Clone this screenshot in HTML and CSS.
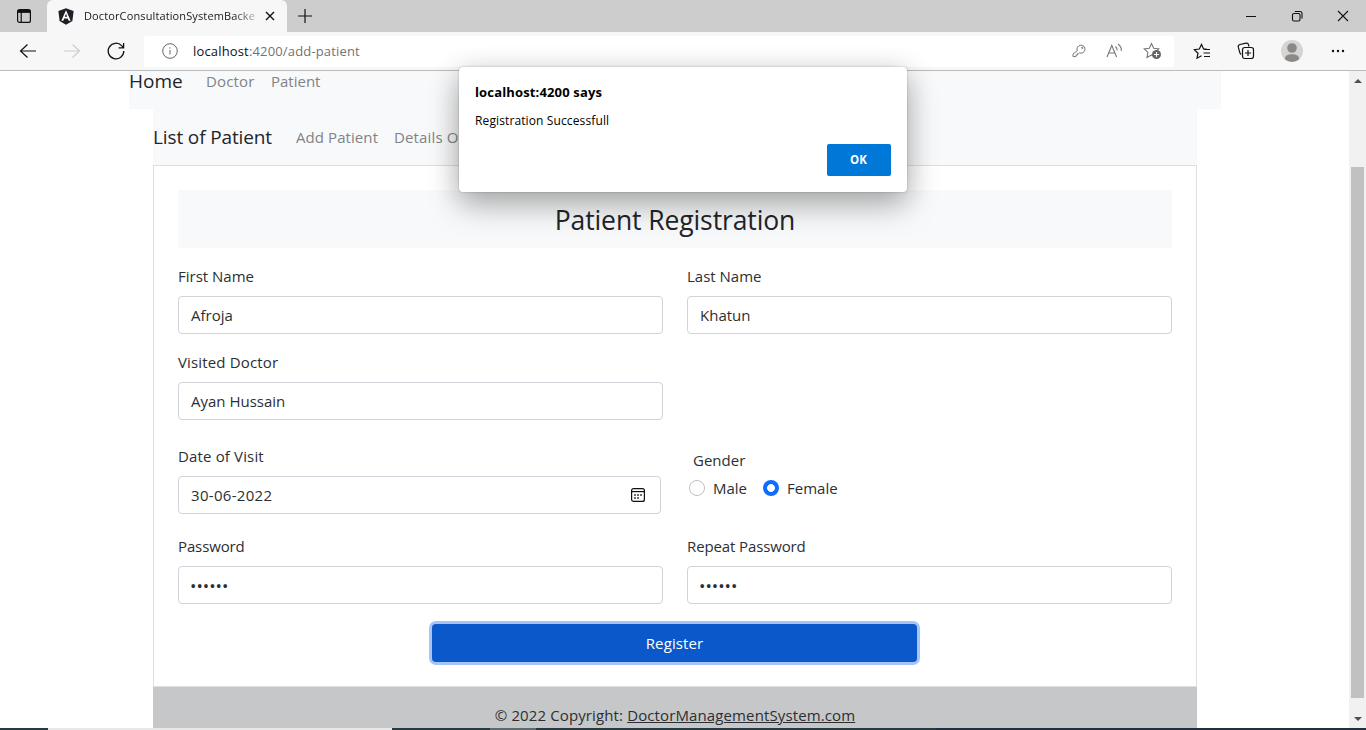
FILE: index.html
```html
<!DOCTYPE html>
<html lang="en">
<head>
<meta charset="utf-8">
<title>DoctorConsultationSystemBackend</title>
<link rel="stylesheet" href="styles.css">
</head>
<body>
<div class="window">
  <header class="tabstrip">
    <svg class="tab-actions" width="16" height="16" viewBox="0 0 16 16" fill="none" stroke="#111" stroke-width="1.2"><rect x="1.6" y="1.6" width="12.8" height="12.8" rx="2"/><path d="M1.6 3.4h12.8" stroke-width="3"/><path d="M5.2 4v10.4"/></svg>
    <div class="tab">
      <svg width="16" height="17" viewBox="0 0 16 17"><path d="M8 .3l7.6 2.7-1.2 10L8 16.7 1.600 13 .4 3z" fill="#1d2025"/><path d="M8 2.200L3.300 12.800h2l.9-2.400h3.600l.9 2.400h2zM8 5.700l1.200 3H6.800z" fill="#fff" fill-rule="evenodd"/></svg>
      <span class="tab-title">DoctorConsultationSystemBacke</span>
      <svg class="tab-close" width="10" height="10" viewBox="0 0 10 10" stroke="#111" stroke-width="1.4"><path d="M1 1l8 8M9 1L1 9"/></svg>
    </div>
    <svg class="new-tab" width="16" height="16" viewBox="0 0 16 16" stroke="#111" stroke-width="1.200"><path d="M8 1v14M1 8h14"/></svg>
    <div class="window-buttons">
      <svg width="12" height="12" viewBox="0 0 12 12" stroke="#111"><path d="M1 6.500h10"/></svg>
      <svg width="12" height="12" viewBox="0 0 12 12" fill="none" stroke="#111" stroke-width="1.100"><rect x="1.500" y="3.500" width="7.500" height="7.500" rx="1.500"/><path d="M3.800 1.500h5.200a2 2 0 0 1 2 2v5"/></svg>
      <svg width="12" height="12" viewBox="0 0 12 12" stroke="#111" stroke-width="1.100"><path d="M1 1l10 10M11 1L1 11"/></svg>
    </div>
  </header>
  <div class="toolbar">
    <svg class="nav-back" width="18" height="16" viewBox="0 0 18 16" fill="none" stroke="#111" stroke-width="1.200"><path d="M17 8H1.500M8.500 1.500L1.500 8l7 6.500"/></svg>
    <svg class="nav-forward" width="18" height="16" viewBox="0 0 18 16" fill="none" stroke="#ccc" stroke-width="1.200"><path d="M1 8h15.500M9.500 1.500l7 6.500-7 6.500"/></svg>
    <svg class="nav-reload" width="18" height="18" viewBox="0 0 18 18" fill="none" stroke="#111" stroke-width="1.300"><path d="M16.800 9A7.800 7.800 0 1 1 14.600 3.600L16.500 5.600M16.600 1v4.800h-5"/></svg>
    <div class="address">
      <svg class="info" width="16" height="16" viewBox="0 0 16 16" fill="none" stroke="#666"><circle cx="8" cy="8" r="7.300"/><path d="M8 7v4.500M8 4.300v1.300"/></svg>
      <span class="url"><b>localhost</b>:4200/add-patient</span>
      <div class="address-icons">
        <svg width="14" height="14" viewBox="0 0 14 14" fill="none" stroke="#777"><path d="M5.300 6.700A4 4 0 1 1 7.500 8.900L6.600 9.700H5.400v1.400H4v1.500H1v-2.600z"/><circle cx="10.300" cy="3.800" r=".7"/></svg>
        <svg width="17" height="16" viewBox="0 0 17 16" fill="none" stroke="#777" stroke-width="1.100"><path d="M1 14L5.800 2.500 10.600 14M2.700 10h6.200M9.500 3.500q2 1.800 1.600 4M12 1q4 3 3.300 7"/></svg>
        <svg width="19" height="18" viewBox="0 0 19 18"><path d="M8.500 1.500l2.200 4.700 5.100.7-3.700 3.500.9 5-4.500-2.500L4 15.500l.9-5.100L1.200 6.900l5.100-.7z" fill="none" stroke="#777" stroke-width="1.100"/><circle cx="13.500" cy="12.500" r="4.500" fill="#666"/><path d="M13.500 10v5M11 12.500h5" stroke="#fff"/></svg>
      </div>
    </div>
    <div class="toolbar-icons">
      <svg width="18" height="17" viewBox="0 0 18 17" fill="none" stroke="#111" stroke-width="1.200"><path d="M14 6.300l-3.400-.4L8.500 1.500 6.300 6l-5 .7L5 10.200l-1 5 4.500-2.500M11 6.500h6M10.500 10H17M11 13.500h6"/></svg>
      <svg width="18" height="18" viewBox="0 0 18 18" fill="none" stroke="#111" stroke-width="1.200"><path d="M4.200 12.500A3 3 0 0 1 2.800 10.700L1.300 5.200A2.300 2.300 0 0 1 3 2.500L9 1.200A2.300 2.300 0 0 1 11.600 3l.4 1.500"/><rect x="5.500" y="5.500" width="11" height="11" rx="2.200"/><path d="M11 8v6M8 11h6"/></svg>
      <svg width="22" height="22" viewBox="0 0 22 22"><circle cx="11" cy="11" r="11" fill="#d6d4d2"/><circle cx="11" cy="8" r="4.800" fill="#8b8987"/><path d="M3.800 19.200q0-5 7.200-5t7.200 5A11 11 0 0 1 3.800 19.200z" fill="#8b8987"/></svg>
      <svg class="more" width="14" height="4" viewBox="0 0 14 4" fill="#111"><circle cx="2" cy="2" r="1.200"/><circle cx="7" cy="2" r="1.200"/><circle cx="12" cy="2" r="1.200"/></svg>
    </div>
  </div>

  <div class="viewport">
    <main class="page">
      <nav class="site-nav"><span class="brand home">Home</span><span class="link doctor">Doctor</span><span class="link patient">Patient</span></nav>
      <nav class="sub-nav"><span class="brand list">List of Patient</span><span class="link add">Add Patient</span><span class="link details">Details Of Patient</span></nav>
      <section class="card">
        <h3 class="card-title">Patient Registration</h3>
        <div class="form-row names">
          <div><label>First Name</label><div class="field">Afroja</div></div>
          <div><label>Last Name</label><div class="field">Khatun</div></div>
        </div>
        <div class="form-row doctors">
          <div><label class="visited">Visited Doctor</label><div class="field">Ayan Hussain</div></div>
        </div>
        <div class="form-row visit">
          <div><label class="date">Date of Visit</label>
            <div class="field date-field"><span>30-06-2022</span>
              <svg width="14" height="14" viewBox="0 0 14 14" fill="none" stroke="#111" stroke-width="1.200"><rect x=".6" y=".6" width="12.800" height="12.800" rx="2"/><path d="M.6 3.600h12.800"/><path d="M3.200 7h1.600M6.200 7h1.600M9.200 7h1.600M3.200 10h1.600M6.200 10h1.600" stroke-width="1.600"/></svg>
            </div></div>
          <div class="gender"><label>Gender</label>
            <div class="radios"><span class="radio"></span><span class="male">Male</span><span class="radio checked"></span><span>Female</span></div></div>
        </div>
        <div class="form-row passwords">
          <div><label class="pass">Password</label><div class="field dots">••••••</div></div>
          <div><label class="pass">Repeat Password</label><div class="field dots">••••••</div></div>
        </div>
        <div class="register">Register</div>
      </section>
      <footer class="footer"><span class="copy">© 2022 Copyright: </span><span class="site">DoctorManagementSystem.com</span></footer>
    </main>
    <div class="scrollbar">
      <svg width="10" height="6" viewBox="0 0 10 6"><path d="M1 5h8L5 1z" fill="#505050"/></svg>
      <div class="thumb"></div>
      <svg width="10" height="6" viewBox="0 0 10 6"><path d="M1 1h8L5 5z" fill="#505050"/></svg>
    </div>
  </div>
  <div class="taskbar"><i class="t1"></i><i class="t2"></i><i class="t3"></i><i class="t4"></i><i class="t5"></i></div>

  <div class="dialog">
    <div class="dialog-title">localhost:4200 says</div>
    <div class="dialog-text">Registration Successfull</div>
    <div class="ok">OK</div>
  </div>
</div>
</body>
</html>
```

FILE: styles.css
```css
* { box-sizing: border-box; }
body { margin: 0; background: #fff; color: #2b2f33; font: 400 15px/24px "Open Sans", "Noto Sans", sans-serif; }
svg { display: block; flex: none; }
.window { position: relative; width: 1366px; height: 730px; overflow: hidden; display: flex; flex-direction: column; white-space: nowrap; }

.tabstrip { height: 32px; flex: none; background: #cdcdcd; display: flex; align-items: center; }
.tab-actions { margin-left: 16px; }
.tab { width: 240px; height: 32px; margin-left: 15px; padding-left: 11px; background: #f7f7f7; border-radius: 6px 6px 0 0; display: flex; align-items: center; }
.tab-title { width: 172px; margin-left: 10px; color: #1a1a1a; font-size: 11px; letter-spacing: .12px; -webkit-mask-image: linear-gradient(90deg, #000 150px, rgba(0,0,0,.25) 172px); mask-image: linear-gradient(90deg, #000 150px, rgba(0,0,0,.25) 172px); }
.tab-close { margin-left: 9px; }
.new-tab { margin-left: 10px; }
.window-buttons { display: flex; gap: 34px; margin-left: auto; padding-right: 17px; }

.toolbar { height: 39px; flex: none; background: #f7f7f7; border-bottom: 1px solid #bbb; display: flex; align-items: center; }
.nav-back { margin-left: 19px; }
.nav-forward { margin-left: 26px; }
.nav-reload { margin-left: 26px; }
.address { width: 1030px; height: 31px; margin-left: 19px; padding: 0 12px 0 18px; background: #fff; border-radius: 3px; display: flex; align-items: center; }
.url { margin-left: 15px; font-size: 13px; letter-spacing: .16px; color: #737373; }
.url b { font-weight: inherit; color: #111; }
.address-icons { display: flex; align-items: center; gap: 20px; margin-left: auto; }
.toolbar-icons { display: flex; align-items: center; gap: 26px; margin-left: 19px; }
.more { margin-left: 2px; }

.viewport { flex: 1; min-height: 0; display: flex; overflow: hidden; }
.page { width: 1349px; flex: none; overflow: hidden; }
.site-nav { width: 1092px; height: 38px; margin-left: 129px; background: #f8f9fa; display: flex; line-height: 21px; }
.brand { font-size: 19px; color: #212529; }
.home { width: 53px; }
.list { width: 119px; letter-spacing: -.13px; }
.link { color: #818386; }
.doctor { width: 49px; margin-left: 24px; letter-spacing: .15px; }
.patient { margin-left: 16px; }
.sub-nav { width: 1044px; height: 56px; margin-left: 153px; background: #f8f9fa; display: flex; line-height: 57px; }
.add { width: 82px; margin-left: 24px; letter-spacing: .08px; }
.details { margin-left: 16px; letter-spacing: .15px; }

.card { width: 1044px; height: 522px; margin-left: 153px; padding: 24px; border: 1px solid #dfdfdf; background: #fff; }
.card-title { height: 58px; margin: 0 0 16px; background: #f8f9fa; color: #212529; font-size: 26.500px; font-weight: 400; line-height: 61px; letter-spacing: -.1px; text-align: center; }
.form-row { display: grid; grid-template-columns: 485px 485px; column-gap: 24px; }
label { display: block; height: 24px; margin-bottom: 8px; }
.visited, .date { letter-spacing: .15px; }
.pass { letter-spacing: -.12px; }
.field { height: 38px; padding: 0 12px; border: 1px solid #ced4da; border-radius: 4px; line-height: 37px; }
.names { margin-bottom: 16px; }
.doctors { margin-bottom: 24px; }
.visit { grid-template-columns: 483px 485px; column-gap: 26px; margin-bottom: 20px; }
.date-field { display: flex; justify-content: space-between; align-items: center; padding-right: 15px; letter-spacing: .3px; }
.gender { padding-top: 4px; }
.gender label { margin: 0 0 4px 6px; }
.radios { display: flex; align-items: center; padding-left: 2px; }
.radio { width: 16px; height: 16px; margin-right: 8px; border: 1px solid #bfbfbf; border-radius: 50%; background: #fff; }
.male { width: 34px; }
.radio.checked { margin-left: 16px; border-width: 0; background: radial-gradient(circle, #fff 3.500px, #0d6efd 4.300px); }
.dots { font-size: 17px; padding-left: 11px; }
.register { width: 485px; height: 38px; margin: 20px 0 0 254px; border-radius: 4px; background: #0a58ca; box-shadow: 0 0 0 3px #a5c5f8; color: #fff; line-height: 38px; text-align: center; letter-spacing: .1px; }
.footer { width: 1044px; height: 60px; margin-left: 153px; background: #c6c7c8; line-height: 57px; text-align: center; white-space: pre; letter-spacing: .12px; }
.site { text-decoration: underline; }

.scrollbar { width: 17px; background: #f1f1f1; display: flex; flex-direction: column; align-items: center; padding: 7px 0 6px; }
.thumb { width: 13px; height: 531px; margin: 83px 0 auto; background: #c1c1c1; }

.taskbar { height: 2px; flex: none; display: flex; background: #20303f; }
.taskbar i { height: 2px; }
.t1 { width: 48px; background: #263a42; }
.t2 { width: 344px; background: #e8e8e8; }
.t3 { width: 98px; background: #263a42; }
.t4 { width: 46px; background: #5c6b70; }
.t5 { width: 400px; background: #263a42; }

.dialog { position: absolute; left: 459px; top: 67px; width: 448px; height: 125px; padding: 13px 16px; border-radius: 4px; background: #fff; box-shadow: 0 0 2px rgba(0,0,0,.3), 0 14px 32px rgba(0,0,0,.26), 0 4px 28px rgba(0,0,0,.14); color: #000; display: flex; flex-direction: column; }
.dialog-title { font-size: 13px; font-weight: 700; letter-spacing: .15px; }
.dialog-text { margin-top: 5px; font-size: 12px; letter-spacing: .12px; }
.ok { width: 64px; height: 32px; margin: 11px 0 0 auto; padding-right: 1px; border-radius: 2px; background: #0078d7; color: #fff; font-size: 11.500px; font-weight: 700; line-height: 32px; text-align: center; }
```
